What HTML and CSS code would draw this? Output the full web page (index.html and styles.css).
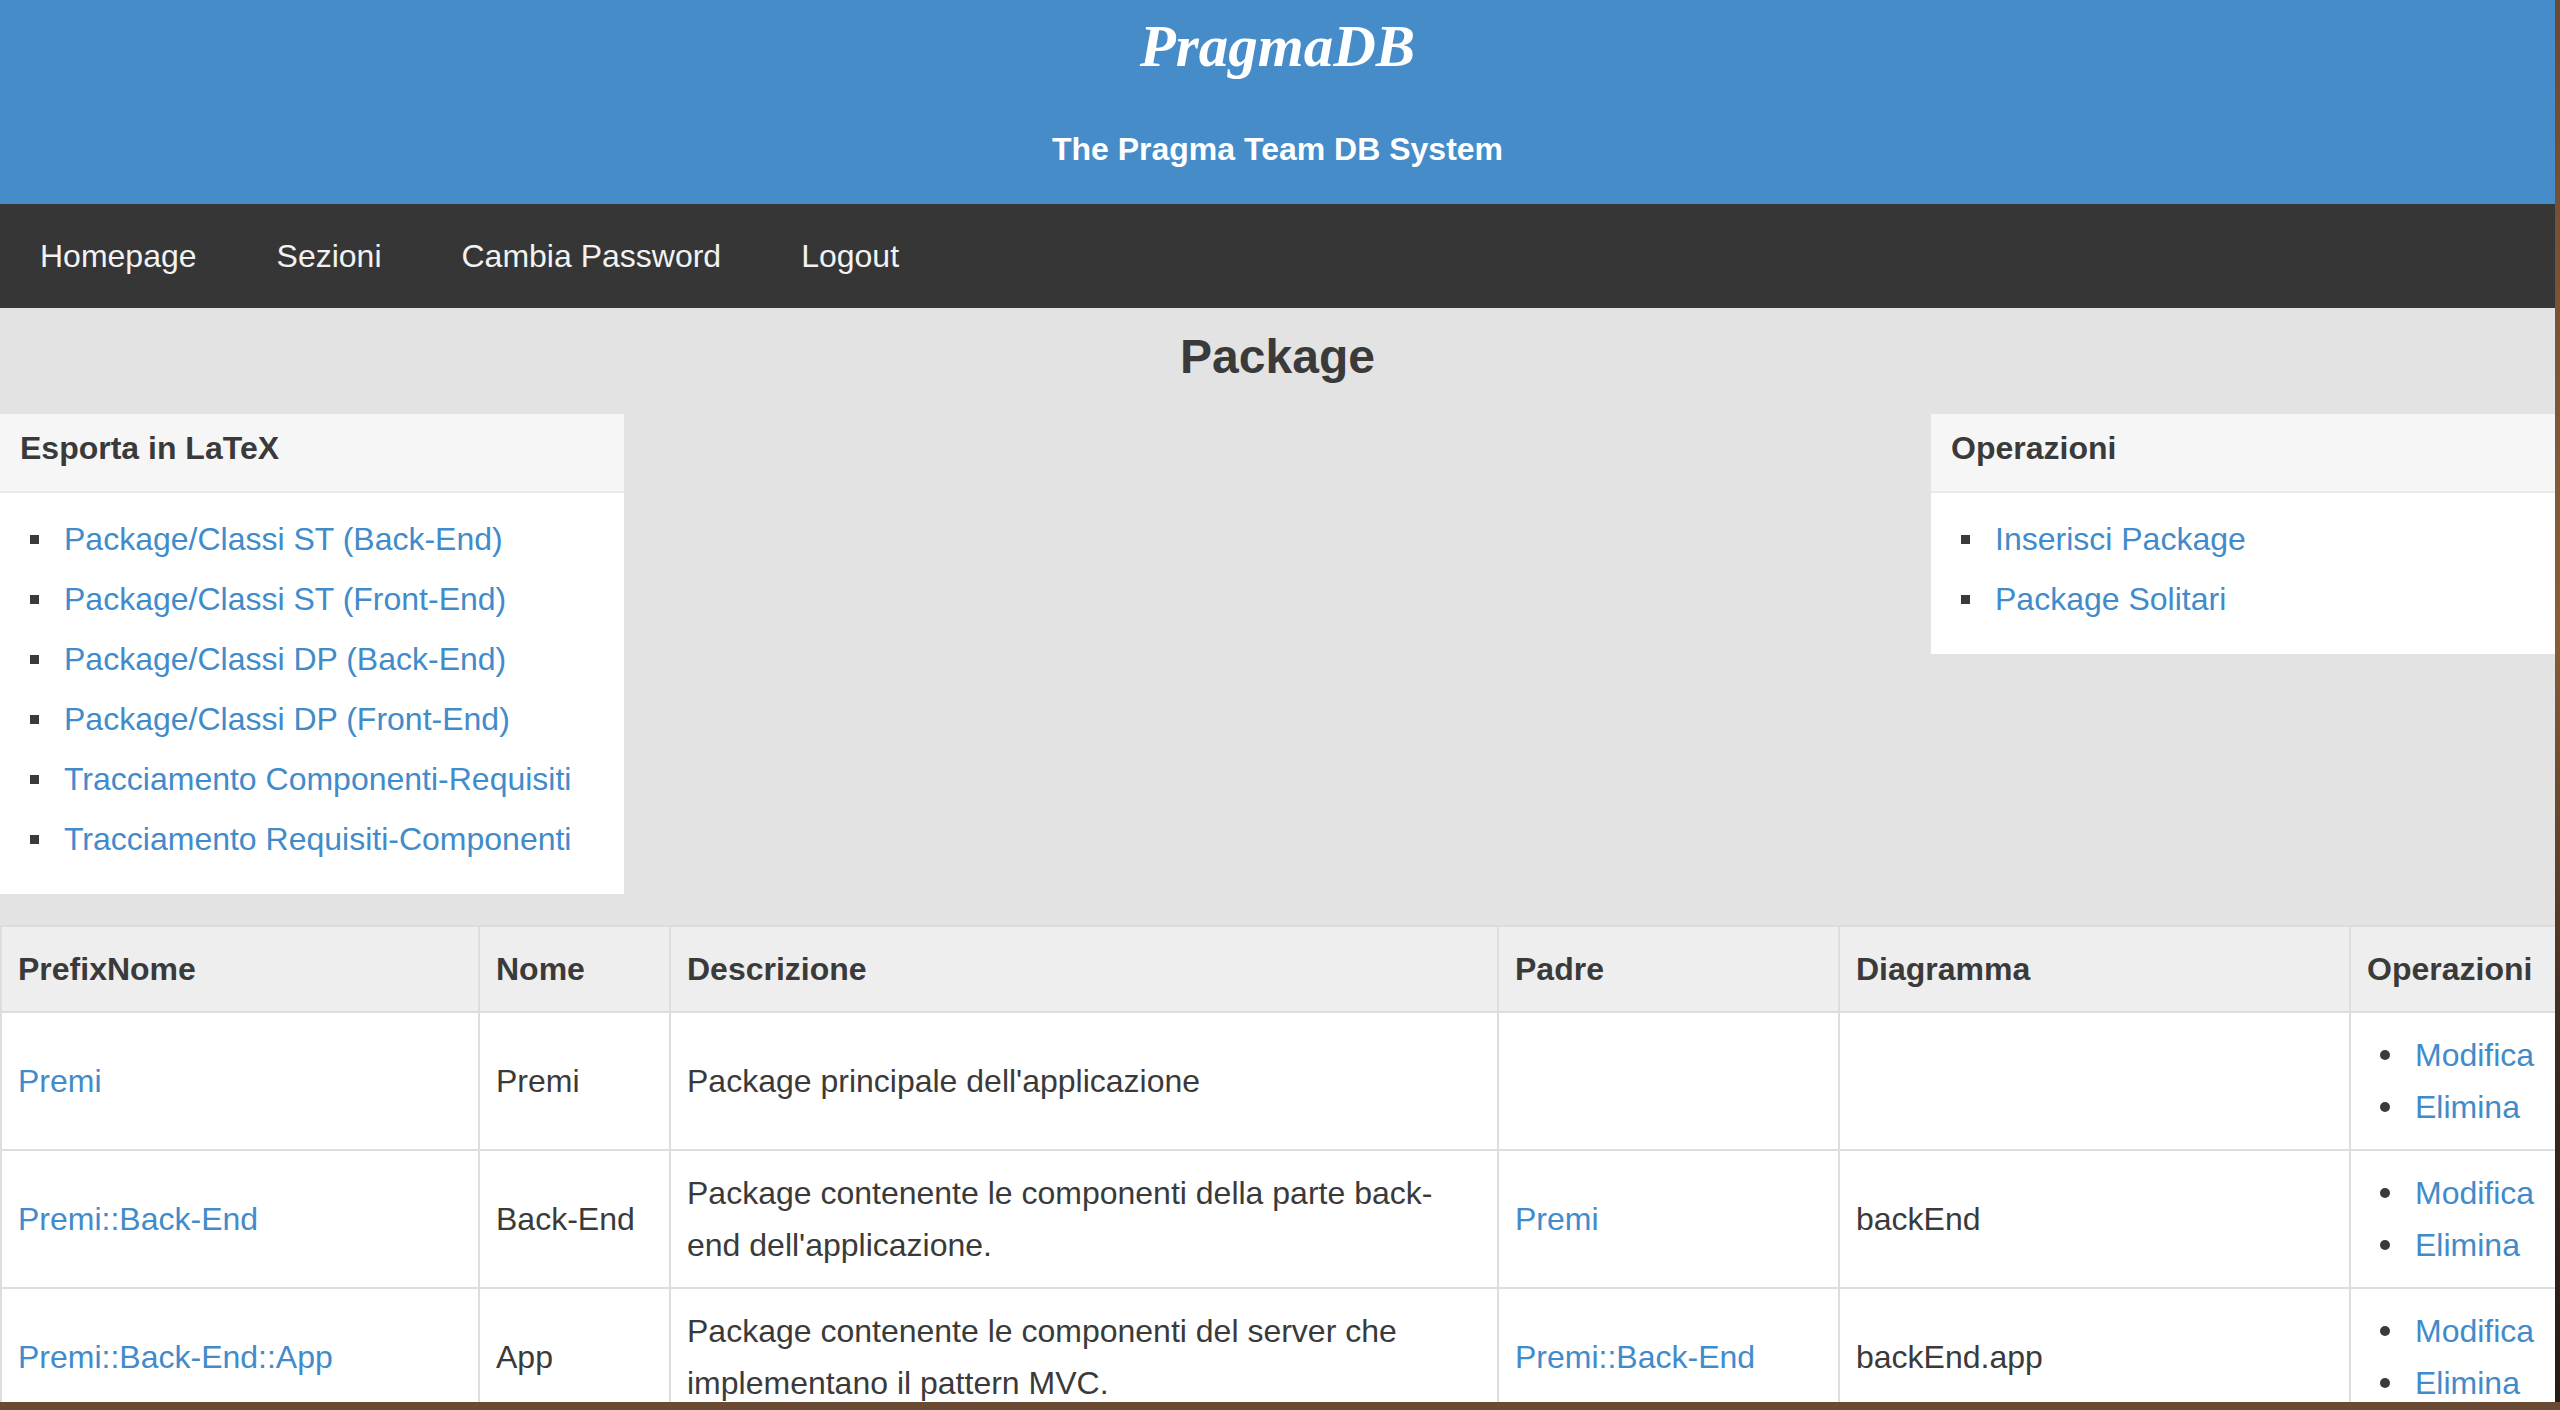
FILE: index.html
```html
<!DOCTYPE html>
<html lang="it">
<head>
<meta charset="utf-8">
<title>PragmaDB - Package</title>
<link rel="stylesheet" href="styles.css">
</head>
<body>
<div class="window">
  <header class="site-header">
    <h1 class="brand">PragmaDB</h1>
    <p class="tagline">The Pragma Team DB System</p>
  </header>
  <nav class="main-nav">
    <ul>
      <li><a href="#">Homepage</a></li>
      <li><a href="#">Sezioni</a></li>
      <li><a href="#">Cambia Password</a></li>
      <li><a href="#">Logout</a></li>
    </ul>
  </nav>
  <main class="content">
    <h2 class="page-title">Package</h2>
    <div class="panels">
      <section class="panel">
        <div class="panel-heading">Esporta in LaTeX</div>
        <ul class="panel-list">
          <li><a href="#">Package/Classi ST (Back-End)</a></li>
          <li><a href="#">Package/Classi ST (Front-End)</a></li>
          <li><a href="#">Package/Classi DP (Back-End)</a></li>
          <li><a href="#">Package/Classi DP (Front-End)</a></li>
          <li><a href="#">Tracciamento Componenti-Requisiti</a></li>
          <li><a href="#">Tracciamento Requisiti-Componenti</a></li>
        </ul>
      </section>
      <section class="panel">
        <div class="panel-heading">Operazioni</div>
        <ul class="panel-list">
          <li><a href="#">Inserisci Package</a></li>
          <li><a href="#">Package Solitari</a></li>
        </ul>
      </section>
    </div>
    <table class="data-table">
      <colgroup>
        <col class="c-prefix">
        <col class="c-nome">
        <col class="c-desc">
        <col class="c-padre">
        <col class="c-diag">
        <col class="c-ops">
      </colgroup>
      <thead>
        <tr>
          <th>PrefixNome</th>
          <th>Nome</th>
          <th>Descrizione</th>
          <th>Padre</th>
          <th>Diagramma</th>
          <th>Operazioni</th>
        </tr>
      </thead>
      <tbody>
        <tr>
          <td><a href="#">Premi</a></td>
          <td>Premi</td>
          <td>Package principale dell'applicazione</td>
          <td></td>
          <td></td>
          <td><ul class="ops"><li><a href="#">Modifica</a></li><li><a href="#">Elimina</a></li></ul></td>
        </tr>
        <tr>
          <td><a href="#">Premi::Back-End</a></td>
          <td>Back-End</td>
          <td>Package contenente le componenti della parte back-end dell'applicazione.</td>
          <td><a href="#">Premi</a></td>
          <td>backEnd</td>
          <td><ul class="ops"><li><a href="#">Modifica</a></li><li><a href="#">Elimina</a></li></ul></td>
        </tr>
        <tr>
          <td><a href="#">Premi::Back-End::App</a></td>
          <td>App</td>
          <td>Package contenente le componenti del server che implementano il pattern MVC.</td>
          <td><a href="#">Premi::Back-End</a></td>
          <td>backEnd.app</td>
          <td><ul class="ops"><li><a href="#">Modifica</a></li><li><a href="#">Elimina</a></li></ul></td>
        </tr>
      </tbody>
    </table>
  </main>
</div>
</body>
</html>
```

FILE: styles.css
```css
html, body {
  margin: 0;
  padding: 0;
}

body {
  background: linear-gradient(to bottom, #6b4a33 0%, #8a5d36 45%, #3a2a1f 75%, #261c16 100%);
  font-family: "Liberation Sans", Arial, Helvetica, sans-serif;
  font-size: 32px;
  color: #333333;
  overflow: hidden;
}

a {
  color: #428bca;
  text-decoration: none;
}

.window {
  width: 2555px;
  height: 1402px;
  overflow: hidden;
  background: #e3e3e3;
}

/* Header */
.site-header {
  background: #458cc9;
  color: #ffffff;
  text-align: center;
  padding: 14px 0 37px;
}

.brand {
  margin: 0;
  font-family: "Liberation Serif", "Times New Roman", serif;
  font-style: italic;
  font-weight: bold;
  font-size: 59px;
  line-height: 64px;
}

.tagline {
  margin: 53px 0 0;
  font-weight: bold;
  font-size: 32px;
  line-height: 36px;
}

/* Navigation */
.main-nav {
  background: #363636;
  height: 104px;
}

.main-nav ul {
  display: flex;
  margin: 0;
  padding: 0;
  list-style: none;
}

.main-nav a {
  display: block;
  padding: 0 40px;
  line-height: 104px;
  color: #f2f2f2;
}

/* Content */
.page-title {
  margin: 0;
  padding-top: 21px;
  font-size: 48px;
  line-height: 56px;
  font-weight: bold;
  text-align: center;
  color: #3a3a3a;
}

.panels {
  display: flex;
  justify-content: space-between;
  align-items: flex-start;
  margin-top: 29px;
}

.panel {
  width: 624px;
  background: #ffffff;
}

.panel-heading {
  background: #f6f6f6;
  border-bottom: 2px solid #e9e9e9;
  padding: 16px 20px 25px;
  font-weight: bold;
  line-height: 36px;
  color: #3a3a3a;
}

.panel-list {
  list-style: none;
  margin: 0;
  padding: 16px 0 25px;
}

.panel-list li {
  display: flex;
  align-items: center;
  height: 60px;
}

.panel-list li::before {
  content: "";
  flex: none;
  width: 9px;
  height: 9px;
  background: #3a3a3a;
  margin: 0 25px 0 30px;
}

/* Table */
.data-table {
  margin-top: 31px;
  width: 2555px;
  border-collapse: collapse;
  table-layout: fixed;
  background: #ffffff;
  color: #3a3a3a;
}

.c-prefix { width: 478px; }
.c-nome { width: 191px; }
.c-desc { width: 828px; }
.c-padre { width: 341px; }
.c-diag { width: 511px; }
.c-ops { width: 206px; }

.data-table th,
.data-table td {
  border: 2px solid #dddddd;
  padding: 16px;
  line-height: 52px;
  vertical-align: middle;
  text-align: left;
}

.data-table th {
  background: #eeeeee;
  font-weight: bold;
}

.data-table td {
  background: #ffffff;
}

.ops {
  list-style: none;
  margin: 0;
  padding: 0;
}

.ops li {
  display: flex;
  align-items: center;
}

.ops li::before {
  content: "";
  flex: none;
  width: 10px;
  height: 10px;
  border-radius: 50%;
  background: #3a3a3a;
  margin: 0 25px 0 13px;
}
```
